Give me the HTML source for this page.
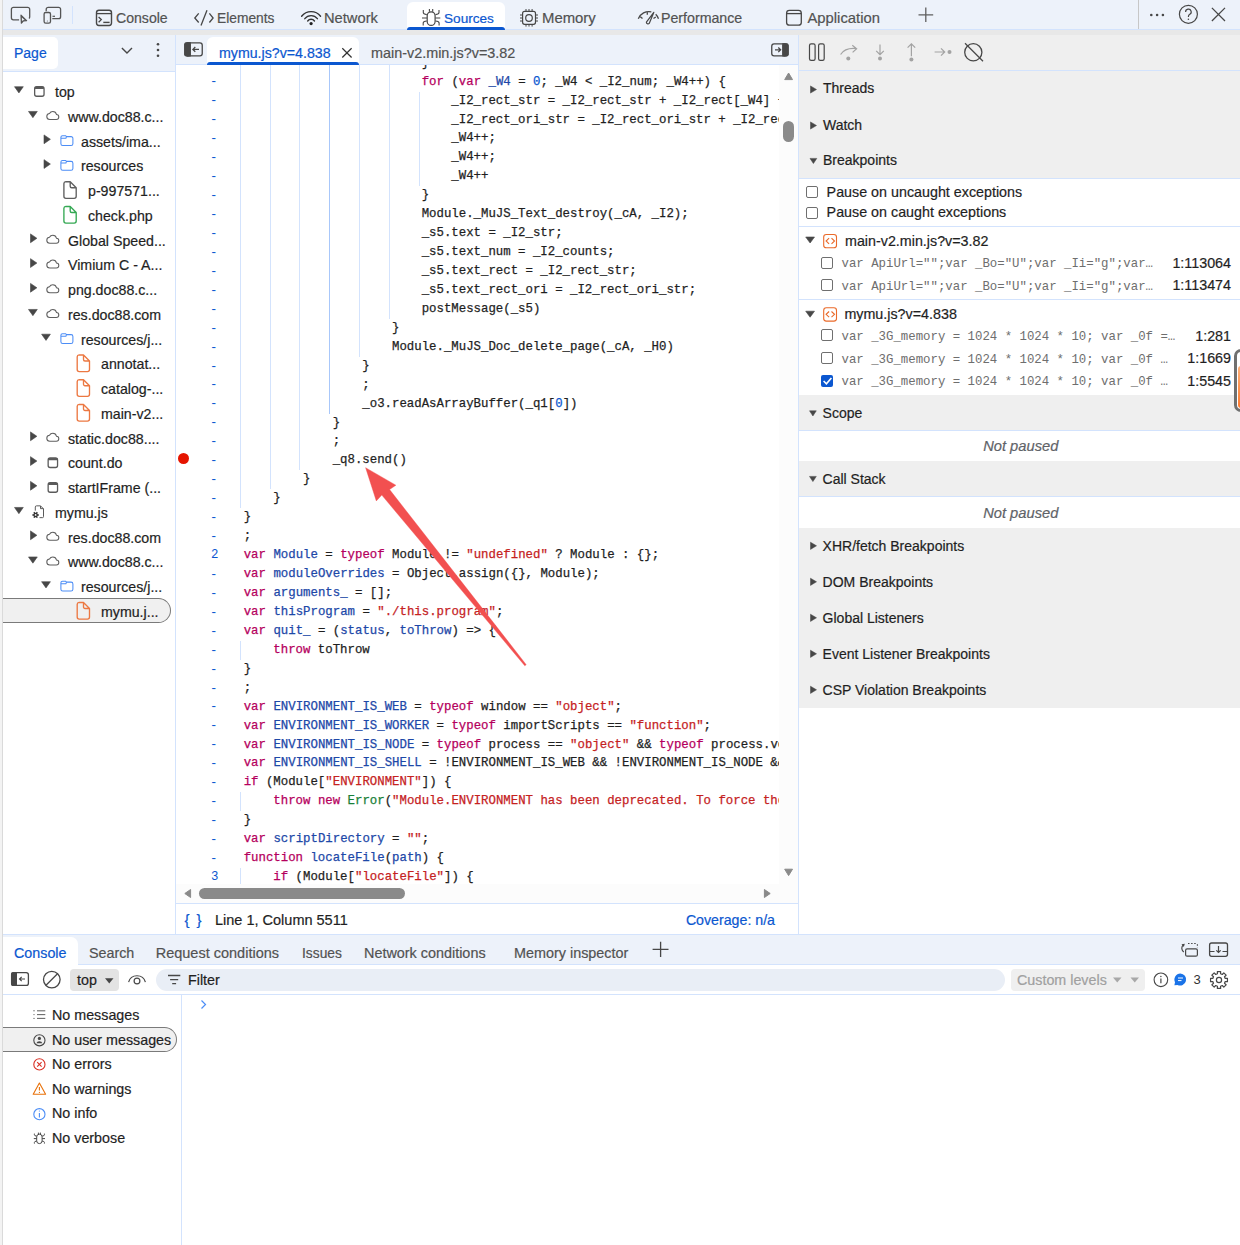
<!DOCTYPE html>
<html><head><meta charset="utf-8">
<style>
*{margin:0;padding:0;box-sizing:border-box}
html,body{width:1240px;height:1245px;overflow:hidden;background:#fff;font-family:"Liberation Sans",sans-serif;color:#1f1f1f}
.a{position:absolute}
.t{position:absolute;white-space:nowrap;font-size:14px;line-height:16px;-webkit-text-stroke:0.2px currentColor}
.bg1{background:#edf2fa}
.hl{position:absolute;height:1px;background:#d3e3fd}
.vl{position:absolute;width:1px;background:#d3e3fd}
.code{position:absolute;font-family:"Liberation Mono",monospace;font-size:12.37px;line-height:18.94px;white-space:pre;color:#1f1f1f;-webkit-text-stroke:0.25px currentColor}
.k{color:#b5005d}
.d{color:#1d48a8}
.s{color:#c5221f}
.n{color:#0b57d0}
.g{color:#188038}
.ln{position:absolute;font-family:"Liberation Mono",monospace;font-size:12.37px;line-height:18.94px;color:#0b57d0;white-space:pre}
.sec{position:absolute;left:799px;width:441px;background:#efefef}
.bpc{position:absolute;font-family:"Liberation Mono",monospace;font-size:12px;line-height:16px;white-space:pre;color:#6e6e6e}
#ov{position:absolute;left:0;top:0}
</style></head><body>
<div class="a" style="left:0px;top:0px;width:2px;height:1245px;background:#f3f3f3;"></div>
<div class="a" style="left:2px;top:0px;width:1px;height:1245px;background:#dadada;"></div>
<div class="a" style="left:3px;top:0px;width:1237px;height:29px;background:#edf2fa;"></div>
<div class="a" style="left:3px;top:29px;width:1237px;height:1px;background:#d3e3fd;"></div>
<div class="a" style="left:3px;top:30px;width:1237px;height:5px;background:#e8e8e8;"></div>
<div class="a" style="left:407px;top:2px;width:98px;height:28px;background:#fff;border-radius:6px 6px 0 0"></div>
<div class="a" style="left:407px;top:27px;width:98px;height:3px;background:#0b57d0;border-radius:3px 3px 0 0"></div>
<div class="a" style="left:1138px;top:0px;width:1px;height:29px;background:#c7c7c7;"></div>
<div class="t" style="left:116px;top:9.70px;color:#525252;font-size:14.1px;">Console</div>
<div class="t" style="left:217px;top:10.70px;color:#525252;font-size:13.8px;">Elements</div>
<div class="t" style="left:324px;top:9.70px;color:#525252;font-size:14.7px;">Network</div>
<div class="t" style="left:444px;top:10.70px;color:#0b57d0;font-size:13.6px;">Sources</div>
<div class="t" style="left:542px;top:9.70px;color:#525252;font-size:14.9px;">Memory</div>
<div class="t" style="left:661px;top:9.70px;color:#525252;font-size:14.2px;">Performance</div>
<div class="t" style="left:807.5px;top:9.70px;color:#525252;font-size:14.8px;">Application</div>
<div class="a" style="left:3px;top:35px;width:172px;height:36px;background:#edf2fa;"></div>
<div class="a" style="left:3px;top:37px;width:55px;height:32px;background:#fff;border-radius:0 5px 5px 0"></div>
<div class="t" style="left:14px;top:44.60px;color:#0b57d0;">Page</div>
<div class="a" style="left:3px;top:71px;width:172px;height:1px;background:#d3e3fd;"></div>
<div class="a" style="left:175px;top:35px;width:1px;height:899px;background:#d3e3fd;"></div>
<div class="a" style="left:3px;top:598px;width:168px;height:25px;background:#f0f0f0;border:1px solid #7a7a7a;border-left:none;border-radius:0 12.5px 12.5px 0"></div>
<div class="t" style="left:55px;top:84.20px;color:#1f1f1f;font-size:14.2px;">top</div>
<div class="t" style="left:68px;top:108.95px;color:#1f1f1f;font-size:14.2px;">www.doc88.c...</div>
<div class="t" style="left:81px;top:133.70px;color:#1f1f1f;font-size:14.2px;">assets/ima...</div>
<div class="t" style="left:81px;top:158.45px;color:#1f1f1f;font-size:14.2px;">resources</div>
<div class="t" style="left:88px;top:183.20px;color:#1f1f1f;font-size:14.2px;">p-997571...</div>
<div class="t" style="left:88px;top:207.95px;color:#1f1f1f;font-size:14.2px;">check.php</div>
<div class="t" style="left:68px;top:232.70px;color:#1f1f1f;font-size:14.2px;">Global Speed...</div>
<div class="t" style="left:68px;top:257.45px;color:#1f1f1f;font-size:14.2px;">Vimium C - A...</div>
<div class="t" style="left:68px;top:282.20px;color:#1f1f1f;font-size:14.2px;">png.doc88.c...</div>
<div class="t" style="left:68px;top:306.95px;color:#1f1f1f;font-size:14.2px;">res.doc88.com</div>
<div class="t" style="left:81px;top:331.70px;color:#1f1f1f;font-size:14.2px;">resources/j...</div>
<div class="t" style="left:101px;top:356.45px;color:#1f1f1f;font-size:14.2px;">annotat...</div>
<div class="t" style="left:101px;top:381.20px;color:#1f1f1f;font-size:14.2px;">catalog-...</div>
<div class="t" style="left:101px;top:405.95px;color:#1f1f1f;font-size:14.2px;">main-v2...</div>
<div class="t" style="left:68px;top:430.70px;color:#1f1f1f;font-size:14.2px;">static.doc88....</div>
<div class="t" style="left:68px;top:455.45px;color:#1f1f1f;font-size:14.2px;">count.do</div>
<div class="t" style="left:68px;top:480.20px;color:#1f1f1f;font-size:14.2px;">startIFrame (...</div>
<div class="t" style="left:55px;top:504.95px;color:#1f1f1f;font-size:14.2px;">mymu.js</div>
<div class="t" style="left:68px;top:529.70px;color:#1f1f1f;font-size:14.2px;">res.doc88.com</div>
<div class="t" style="left:68px;top:554.45px;color:#1f1f1f;font-size:14.2px;">www.doc88.c...</div>
<div class="t" style="left:81px;top:579.20px;color:#1f1f1f;font-size:14.2px;">resources/j...</div>
<div class="t" style="left:101px;top:603.95px;color:#1f1f1f;font-size:14.2px;">mymu.j...</div>
<div class="a" style="left:176px;top:35px;width:622px;height:29px;background:#edf2fa;"></div>
<div class="a" style="left:176px;top:64px;width:622px;height:1px;background:#d3e3fd;"></div>
<div class="a" style="left:207px;top:37px;width:152px;height:27px;background:#fff;border-radius:6px 6px 0 0"></div>
<div class="a" style="left:207px;top:61.7px;width:152px;height:3px;background:#0b57d0;border-radius:3px 3px 0 0"></div>
<div class="t" style="left:219px;top:44.60px;color:#0b57d0;font-size:14.2px;">mymu.js?v=4.838</div>
<div class="t" style="left:371px;top:44.60px;color:#525252;font-size:14.4px;">main-v2.min.js?v=3.82</div>
<div class="a" style="left:176px;top:65px;width:603px;height:819px;overflow:hidden;background:#fff">
<div class="a" style="left:64px;top:0px;width:1px;height:443.25000000000006px;background:#d3e3fd"></div>
<div class="a" style="left:94px;top:0px;width:1px;height:424.31px;background:#d3e3fd"></div>
<div class="a" style="left:123px;top:0px;width:1px;height:405.37px;background:#d3e3fd"></div>
<div class="a" style="left:153px;top:0px;width:1px;height:348.55px;background:#a8c7fa"></div>
<div class="a" style="left:183px;top:0px;width:1px;height:291.73px;background:#d3e3fd"></div>
<div class="a" style="left:213px;top:0px;width:1px;height:253.85000000000002px;background:#d3e3fd"></div>
<div class="a" style="left:242.5px;top:26.57px;width:1px;height:94.7px;background:#d3e3fd"></div>
<div class="a" style="left:64px;top:575.8299999999999px;width:1px;height:18.94px;background:#d3e3fd"></div>
<div class="a" style="left:64px;top:727.3500000000001px;width:1px;height:18.94px;background:#d3e3fd"></div>
<div class="a" style="left:64px;top:803.1100000000001px;width:1px;height:18.94px;background:#d3e3fd"></div>
<div class="code" style="top:-11.31px;left:67.7px">                        }</div>
<div class="ln" style="top:-10.51px;left:34px">-</div>
<div class="code" style="top:7.63px;left:67.7px">                        <span class="k">for</span> (<span class="k">var</span> <span class="d">_W4</span> = <span class="n">0</span>; _W4 &lt; _I2_num; _W4++) {</div>
<div class="ln" style="top:8.43px;left:34px">-</div>
<div class="code" style="top:26.57px;left:67.7px">                            _I2_rect_str = _I2_rect_str + _I2_rect[_W4] + &quot;</div>
<div class="ln" style="top:27.37px;left:34px">-</div>
<div class="code" style="top:45.51px;left:67.7px">                            _I2_rect_ori_str = _I2_rect_ori_str + _I2_rect_ori</div>
<div class="ln" style="top:46.31px;left:34px">-</div>
<div class="code" style="top:64.45px;left:67.7px">                            _W4++;</div>
<div class="ln" style="top:65.25px;left:34px">-</div>
<div class="code" style="top:83.39px;left:67.7px">                            _W4++;</div>
<div class="ln" style="top:84.19px;left:34px">-</div>
<div class="code" style="top:102.33px;left:67.7px">                            _W4++</div>
<div class="ln" style="top:103.13px;left:34px">-</div>
<div class="code" style="top:121.27px;left:67.7px">                        }</div>
<div class="ln" style="top:122.07px;left:34px">-</div>
<div class="code" style="top:140.21px;left:67.7px">                        Module._MuJS_Text_destroy(_cA, _I2);</div>
<div class="ln" style="top:141.01px;left:34px">-</div>
<div class="code" style="top:159.15px;left:67.7px">                        _s5.text = _I2_str;</div>
<div class="ln" style="top:159.95px;left:34px">-</div>
<div class="code" style="top:178.09px;left:67.7px">                        _s5.text_num = _I2_counts;</div>
<div class="ln" style="top:178.89px;left:34px">-</div>
<div class="code" style="top:197.03px;left:67.7px">                        _s5.text_rect = _I2_rect_str;</div>
<div class="ln" style="top:197.83px;left:34px">-</div>
<div class="code" style="top:215.97px;left:67.7px">                        _s5.text_rect_ori = _I2_rect_ori_str;</div>
<div class="ln" style="top:216.77px;left:34px">-</div>
<div class="code" style="top:234.91px;left:67.7px">                        postMessage(_s5)</div>
<div class="ln" style="top:235.71px;left:34px">-</div>
<div class="code" style="top:253.85px;left:67.7px">                    }</div>
<div class="ln" style="top:254.65px;left:34px">-</div>
<div class="code" style="top:272.79px;left:67.7px">                    Module._MuJS_Doc_delete_page(_cA, _H0)</div>
<div class="ln" style="top:273.59px;left:34px">-</div>
<div class="code" style="top:291.73px;left:67.7px">                }</div>
<div class="ln" style="top:292.53px;left:34px">-</div>
<div class="code" style="top:310.67px;left:67.7px">                ;</div>
<div class="ln" style="top:311.47px;left:34px">-</div>
<div class="code" style="top:329.61px;left:67.7px">                _o3.readAsArrayBuffer(_q1[<span class="n">0</span>])</div>
<div class="ln" style="top:330.41px;left:34px">-</div>
<div class="code" style="top:348.55px;left:67.7px">            }</div>
<div class="ln" style="top:349.35px;left:34px">-</div>
<div class="code" style="top:367.49px;left:67.7px">            ;</div>
<div class="ln" style="top:368.29px;left:34px">-</div>
<div class="code" style="top:386.43px;left:67.7px">            _q8.send()</div>
<div class="ln" style="top:387.23px;left:34px">-</div>
<div class="code" style="top:405.37px;left:67.7px">        }</div>
<div class="ln" style="top:406.17px;left:34px">-</div>
<div class="code" style="top:424.31px;left:67.7px">    }</div>
<div class="ln" style="top:425.11px;left:34px">-</div>
<div class="code" style="top:443.25px;left:67.7px">}</div>
<div class="ln" style="top:444.05px;left:34px">-</div>
<div class="code" style="top:462.19px;left:67.7px">;</div>
<div class="ln" style="top:462.99px;left:34px">-</div>
<div class="code" style="top:481.13px;left:67.7px"><span class="k">var</span> <span class="d">Module</span> = <span class="k">typeof</span> Module != <span class="s">&quot;undefined&quot;</span> ? Module : {};</div>
<div class="ln" style="top:481.13px;left:35px">2</div>
<div class="code" style="top:500.07px;left:67.7px"><span class="k">var</span> <span class="d">moduleOverrides</span> = Object.assign({}, Module);</div>
<div class="ln" style="top:500.87px;left:34px">-</div>
<div class="code" style="top:519.01px;left:67.7px"><span class="k">var</span> <span class="d">arguments_</span> = [];</div>
<div class="ln" style="top:519.81px;left:34px">-</div>
<div class="code" style="top:537.95px;left:67.7px"><span class="k">var</span> <span class="d">thisProgram</span> = <span class="s">&quot;./this.program&quot;</span>;</div>
<div class="ln" style="top:538.75px;left:34px">-</div>
<div class="code" style="top:556.89px;left:67.7px"><span class="k">var</span> <span class="d">quit_</span> = (<span class="d">status</span>, <span class="d">toThrow</span>) =&gt; {</div>
<div class="ln" style="top:557.69px;left:34px">-</div>
<div class="code" style="top:575.83px;left:67.7px">    <span class="k">throw</span> toThrow</div>
<div class="ln" style="top:576.63px;left:34px">-</div>
<div class="code" style="top:594.77px;left:67.7px">}</div>
<div class="ln" style="top:595.57px;left:34px">-</div>
<div class="code" style="top:613.71px;left:67.7px">;</div>
<div class="ln" style="top:614.51px;left:34px">-</div>
<div class="code" style="top:632.65px;left:67.7px"><span class="k">var</span> <span class="d">ENVIRONMENT_IS_WEB</span> = <span class="k">typeof</span> window == <span class="s">&quot;object&quot;</span>;</div>
<div class="ln" style="top:633.45px;left:34px">-</div>
<div class="code" style="top:651.59px;left:67.7px"><span class="k">var</span> <span class="d">ENVIRONMENT_IS_WORKER</span> = <span class="k">typeof</span> importScripts == <span class="s">&quot;function&quot;</span>;</div>
<div class="ln" style="top:652.39px;left:34px">-</div>
<div class="code" style="top:670.53px;left:67.7px"><span class="k">var</span> <span class="d">ENVIRONMENT_IS_NODE</span> = <span class="k">typeof</span> process == <span class="s">&quot;object&quot;</span> &amp;&amp; <span class="k">typeof</span> process.versions</div>
<div class="ln" style="top:671.33px;left:34px">-</div>
<div class="code" style="top:689.47px;left:67.7px"><span class="k">var</span> <span class="d">ENVIRONMENT_IS_SHELL</span> = !ENVIRONMENT_IS_WEB &amp;&amp; !ENVIRONMENT_IS_NODE &amp;&amp; </div>
<div class="ln" style="top:690.27px;left:34px">-</div>
<div class="code" style="top:708.41px;left:67.7px"><span class="k">if</span> (Module[<span class="s">&quot;ENVIRONMENT&quot;</span>]) {</div>
<div class="ln" style="top:709.21px;left:34px">-</div>
<div class="code" style="top:727.35px;left:67.7px">    <span class="k">throw</span> <span class="k">new</span> <span class="g">Error</span>(<span class="s">&quot;Module.ENVIRONMENT has been deprecated. To force the</span></div>
<div class="ln" style="top:728.15px;left:34px">-</div>
<div class="code" style="top:746.29px;left:67.7px">}</div>
<div class="ln" style="top:747.09px;left:34px">-</div>
<div class="code" style="top:765.23px;left:67.7px"><span class="k">var</span> <span class="d">scriptDirectory</span> = <span class="s">&quot;&quot;</span>;</div>
<div class="ln" style="top:766.03px;left:34px">-</div>
<div class="code" style="top:784.17px;left:67.7px"><span class="k">function</span> <span class="d">locateFile</span>(<span class="d">path</span>) {</div>
<div class="ln" style="top:784.97px;left:34px">-</div>
<div class="code" style="top:803.11px;left:67.7px">    <span class="k">if</span> (Module[<span class="s">&quot;locateFile&quot;</span>]) {</div>
<div class="ln" style="top:803.11px;left:35px">3</div>
<div class="a" style="left:2px;top:388px;width:11px;height:11px;border-radius:50%;background:#e51400"></div>
</div>
<div class="a" style="left:779px;top:65px;width:19px;height:819px;background:#fcfcfc;"></div>
<div class="a" style="left:783px;top:121px;width:11px;height:21px;background:#8a8a8a;border-radius:5.5px"></div>
<div class="a" style="left:176px;top:884px;width:603px;height:19px;background:#fcfcfc;"></div>
<div class="a" style="left:198.6px;top:887.7px;width:206.7px;height:11px;background:#8a8a8a;border-radius:5.5px"></div>
<div class="a" style="left:779px;top:884px;width:19px;height:19px;background:#fcfcfc;"></div>
<div class="a" style="left:176px;top:903px;width:622px;height:1px;background:#d3e3fd;"></div>
<div class="t" style="left:184.5px;top:912.00px;color:#0b57d0;font-size:15px;">{</div>
<div class="t" style="left:196.5px;top:912.00px;color:#0b57d0;font-size:15px;">}</div>
<div class="t" style="left:215px;top:912.00px;color:#1f1f1f;font-size:14.5px;">Line 1, Column 5511</div>
<div class="t" style="right:465px;top:912.00px;color:#0b57d0;font-size:14.2px;">Coverage: n/a</div>
<div class="a" style="left:798px;top:35px;width:1px;height:899px;background:#d3e3fd;"></div>
<div class="a" style="left:799px;top:35px;width:441px;height:35px;background:#efefef;"></div>
<div class="a" style="left:799px;top:70px;width:441px;height:1px;background:#d3e3fd;"></div>
<div class="a" style="left:799px;top:71px;width:441px;height:107px;background:#efefef;"></div>
<div class="a" style="left:799px;top:178px;width:441px;height:1px;background:#d3e3fd;"></div>
<div class="t" style="left:823px;top:80.40px;color:#1f1f1f;">Threads</div>
<div class="t" style="left:823px;top:116.60px;color:#1f1f1f;">Watch</div>
<div class="t" style="left:823px;top:152.40px;color:#1f1f1f;">Breakpoints</div>
<div class="t" style="left:826.6px;top:183.50px;color:#1f1f1f;font-size:14.3px;">Pause on uncaught exceptions</div>
<div class="t" style="left:826.6px;top:203.70px;color:#1f1f1f;font-size:14.3px;">Pause on caught exceptions</div>
<div class="a" style="left:799px;top:226px;width:441px;height:1px;background:#d3e3fd;"></div>
<div class="t" style="left:845px;top:233.00px;color:#1f1f1f;font-size:14.3px;">main-v2.min.js?v=3.82</div>
<div class="a" style="left:799px;top:299px;width:441px;height:1px;background:#d3e3fd;"></div>
<div class="t" style="left:844.4px;top:306.30px;color:#1f1f1f;font-size:14.3px;">mymu.js?v=4.838</div>
<div class="a" style="left:799px;top:395px;width:441px;height:35px;background:#efefef;"></div>
<div class="a" style="left:799px;top:430px;width:441px;height:1px;background:#d3e3fd;"></div>
<div class="t" style="left:822.6px;top:405.00px;color:#1f1f1f;">Scope</div>
<div class="t" style="left:983.2px;top:437.50px;color:#5f6368;font-size:14.7px;font-style:italic;">Not paused</div>
<div class="a" style="left:799px;top:461px;width:441px;height:35px;background:#efefef;"></div>
<div class="a" style="left:799px;top:496px;width:441px;height:1px;background:#d3e3fd;"></div>
<div class="t" style="left:822.6px;top:470.50px;color:#1f1f1f;">Call Stack</div>
<div class="t" style="left:983.2px;top:504.60px;color:#5f6368;font-size:14.7px;font-style:italic;">Not paused</div>
<div class="a" style="left:799px;top:528px;width:441px;height:180px;background:#efefef;"></div>
<div class="t" style="left:822.6px;top:538.20px;color:#1f1f1f;">XHR/fetch Breakpoints</div>
<div class="t" style="left:822.6px;top:574.20px;color:#1f1f1f;">DOM Breakpoints</div>
<div class="t" style="left:822.6px;top:610.20px;color:#1f1f1f;">Global Listeners</div>
<div class="t" style="left:822.6px;top:646.20px;color:#1f1f1f;">Event Listener Breakpoints</div>
<div class="t" style="left:822.6px;top:682.20px;color:#1f1f1f;">CSP Violation Breakpoints</div>
<div class="bpc" style="left:841.5px;top:256.40px;font-size:12.37px">var ApiUrl=&quot;&quot;;var _Bo=&quot;U&quot;;var _Ii=&quot;g&quot;;var…</div>
<div class="t" style="right:9px;top:254.90px;color:#1f1f1f;font-size:14.3px;">1:113064</div>
<div class="bpc" style="left:841.5px;top:278.70px;font-size:12.37px">var ApiUrl=&quot;&quot;;var _Bo=&quot;U&quot;;var _Ii=&quot;g&quot;;var…</div>
<div class="t" style="right:9px;top:277.20px;color:#1f1f1f;font-size:14.3px;">1:113474</div>
<div class="bpc" style="left:841.5px;top:329.00px;font-size:12.37px">var _3G_memory = 1024 * 1024 * 10; var _0f =…</div>
<div class="t" style="right:9px;top:327.50px;color:#1f1f1f;font-size:14.3px;">1:281</div>
<div class="bpc" style="left:841.5px;top:351.50px;font-size:12.37px">var _3G_memory = 1024 * 1024 * 10; var _0f …</div>
<div class="t" style="right:9px;top:350.00px;color:#1f1f1f;font-size:14.3px;">1:1669</div>
<div class="bpc" style="left:841.5px;top:374.20px;font-size:12.37px">var _3G_memory = 1024 * 1024 * 10; var _0f …</div>
<div class="t" style="right:9px;top:372.70px;color:#1f1f1f;font-size:14.3px;">1:5545</div>
<div class="a" style="left:806px;top:186.4px;width:12px;height:12px;border:1px solid #6f6f6f;border-radius:2px;background:#fff"></div>
<div class="a" style="left:806px;top:206.6px;width:12px;height:12px;border:1px solid #6f6f6f;border-radius:2px;background:#fff"></div>
<div class="a" style="left:821.3px;top:256.5px;width:12px;height:12px;border:1px solid #6f6f6f;border-radius:2px;background:#fff"></div>
<div class="a" style="left:821.3px;top:279px;width:12px;height:12px;border:1px solid #6f6f6f;border-radius:2px;background:#fff"></div>
<div class="a" style="left:821.3px;top:329.4px;width:12px;height:12px;border:1px solid #6f6f6f;border-radius:2px;background:#fff"></div>
<div class="a" style="left:821.3px;top:352px;width:12px;height:12px;border:1px solid #6f6f6f;border-radius:2px;background:#fff"></div>
<div class="a" style="left:821.3px;top:375px;width:12px;height:12px;border-radius:2px;background:#0b57d0"></div>
<div class="a" style="left:1234px;top:348.5px;width:20px;height:63px;border:3px solid #707070;border-radius:7px;background:#fff"></div>
<div class="a" style="left:1237.5px;top:366px;width:10px;height:42px;background:linear-gradient(#ffb27a,#ff7a2e);border-radius:3px"></div>
<div class="a" style="left:3px;top:934px;width:1237px;height:1px;background:#d3e3fd;"></div>
<div class="a" style="left:3px;top:935px;width:1237px;height:30px;background:#edf2fa;"></div>
<div class="a" style="left:3px;top:937px;width:75px;height:28px;background:#fff;border-radius:0 7px 0 0"></div>
<div class="a" style="left:78px;top:964px;width:1162px;height:1px;background:#d3e3fd;"></div>
<div class="t" style="left:14px;top:945.00px;color:#0b57d0;font-size:14.3px;">Console</div>
<div class="t" style="left:89px;top:945.00px;color:#525252;font-size:14.3px;">Search</div>
<div class="t" style="left:155.7px;top:945.00px;color:#525252;font-size:14.5px;">Request conditions</div>
<div class="t" style="left:302px;top:946.00px;color:#525252;font-size:13.8px;">Issues</div>
<div class="t" style="left:364px;top:945.00px;color:#525252;font-size:14.4px;">Network conditions</div>
<div class="t" style="left:514px;top:945.00px;color:#525252;font-size:14.4px;">Memory inspector</div>
<div class="a" style="left:3px;top:965px;width:1237px;height:29px;background:#fff;"></div>
<div class="a" style="left:3px;top:994px;width:1237px;height:1px;background:#d3e3fd;"></div>
<div class="a" style="left:70px;top:969px;width:49px;height:22px;background:#e3e3e3;border-radius:4px"></div>
<div class="t" style="left:77px;top:972.00px;color:#1f1f1f;font-size:14.3px;">top</div>
<div class="a" style="left:155.7px;top:969px;width:849.3px;height:22.1px;background:#e9eef6;border-radius:11px"></div>
<div class="t" style="left:188px;top:971.60px;color:#1f1f1f;font-size:14.3px;">Filter</div>
<div class="a" style="left:1011px;top:969px;width:134px;height:22px;background:#efefef;border-radius:4px"></div>
<div class="t" style="left:1017px;top:972.00px;color:#a0a0a0;font-size:14.3px;">Custom levels</div>
<div class="t" style="left:1193.5px;top:972.00px;color:#333;font-size:13px;-webkit-text-stroke:0">3</div>
<div class="a" style="left:181px;top:995px;width:1px;height:250px;background:#d3e3fd;"></div>
<div class="a" style="left:3px;top:1027px;width:174px;height:25px;background:#f0f0f0;border:1px solid #7a7a7a;border-left:none;border-radius:0 12.5px 12.5px 0"></div>
<div class="t" style="left:52px;top:1007.00px;color:#1f1f1f;font-size:14.3px;">No messages</div>
<div class="t" style="left:52px;top:1031.60px;color:#1f1f1f;font-size:14.3px;">No user messages</div>
<div class="t" style="left:52px;top:1056.20px;color:#1f1f1f;font-size:14.3px;">No errors</div>
<div class="t" style="left:52px;top:1080.80px;color:#1f1f1f;font-size:14.3px;">No warnings</div>
<div class="t" style="left:52px;top:1105.40px;color:#1f1f1f;font-size:14.3px;">No info</div>
<div class="t" style="left:52px;top:1130.00px;color:#1f1f1f;font-size:14.3px;">No verbose</div>
<svg id="ov" width="1240" height="1245" viewBox="0 0 1240 1245">
<path d="M19.1 19.8H13.4A2 2 0 0 1 11.4 17.8V9.4A2 2 0 0 1 13.4 7.4H27.7A2 2 0 0 1 29.7 9.4V17.1A2 2 0 0 1 29 18.6" fill="none" stroke="#555" stroke-width="1.3"/>
<path d="M21 15.2L26.6 20.6L23.4 20.9L21.4 23.2Z" fill="#555" stroke="#555" stroke-width="1.2" stroke-linejoin="round"/>
<path d="M21.9 17.4L24.6 20L22.9 20.2L22 21.3Z" fill="#edf2fa"/>
<path d="M46.2 11.3V9.4A2 2 0 0 1 48.2 7.4H58.6A2 2 0 0 1 60.6 9.4V16.7A2 2 0 0 1 58.6 18.7H52.3" fill="none" stroke="#555" stroke-width="1.3"/>
<rect x="44.1" y="12.5" width="6.4" height="10.7" rx="1.6" fill="#edf2fa" stroke="#555" stroke-width="1.3"/>
<path d="M52.5 16.3H55" stroke="#555" stroke-width="1.2"/>
<circle cx="47.3" cy="21" r="0.5" fill="#555"/>
<rect x="72" y="6" width="1" height="18" fill="#d3e3fd"/>
<rect x="96.5" y="10.3" width="15" height="15.2" rx="2.4" fill="none" stroke="#474747" stroke-width="1.4"/>
<path d="M96.5 13.6H111.5" stroke="#474747" stroke-width="1.3"/>
<path d="M98.6 17.1L101.3 19.6L98.6 22.3" fill="none" stroke="#474747" stroke-width="1.3"/>
<path d="M103.3 22.4H109.6" stroke="#474747" stroke-width="1.4"/>
<path d="M198.7 13.3L194.8 18L198.7 22.5M209.4 13.3L213.1 18L209.4 22.5M207 10.2L201 25.6" fill="none" stroke="#474747" stroke-width="1.3"/>
<path d="M301.64 16.21A12 12 0 0 1 320.56 16.21" fill="none" stroke="#333" stroke-width="1.4" stroke-linecap="round"/>
<path d="M304.80 18.67A8 8 0 0 1 317.40 18.67" fill="none" stroke="#333" stroke-width="1.4" stroke-linecap="round"/>
<path d="M307.71 20.95A4.3 4.3 0 0 1 314.49 20.95" fill="none" stroke="#333" stroke-width="1.4" stroke-linecap="round"/>
<circle cx="311.1" cy="23.6" r="1.6" fill="#222"/>
<rect x="427.2" y="11.8" width="7.9" height="13.6" rx="3.95" fill="none" stroke="#474747" stroke-width="1.2"/>
<path d="M429.4 9V11.8M432.7 9V11.8" stroke="#474747" stroke-width="1.1"/>
<path d="M423.3 10V12.5Q423.3 14.3 426.8 14.6M439 10V12.5Q439 14.3 435.5 14.6M422 18H427M435.3 18H440.3M423.2 25.5V23Q423.2 21.3 426.8 21M439.1 25.5V23Q439.1 21.3 435.5 21" fill="none" stroke="#474747" stroke-width="1.1"/>
<rect x="522.6" y="11.4" width="12.9" height="12.9" rx="2" fill="none" stroke="#474747" stroke-width="1.2"/>
<path d="M526 9V11.4M526 24.3V26.6" stroke="#474747" stroke-width="1"/>
<path d="M529 9V11.4M529 24.3V26.6" stroke="#474747" stroke-width="1"/>
<path d="M532.1 9V11.4M532.1 24.3V26.6" stroke="#474747" stroke-width="1"/>
<path d="M520 15H522.6M535.5 15H538" stroke="#474747" stroke-width="1"/>
<path d="M520 18H522.6M535.5 18H538" stroke="#474747" stroke-width="1"/>
<path d="M520 21H522.6M535.5 21H538" stroke="#474747" stroke-width="1"/>
<circle cx="529" cy="18" r="3.3" fill="none" stroke="#474747" stroke-width="1.2"/>
<path d="M638.3 18.7A11.5 11.5 0 0 1 651.3 11.8M655.7 14.3A11.5 11.5 0 0 1 658.5 18.8M647.3 11.5V14.7M640.3 16.7L642.5 18.5M653.5 18.5L655.8 17" fill="none" stroke="#474747" stroke-width="1.3"/>
<path d="M653.8 12.4L646.4 22.2A1.6 1.6 0 0 0 649.2 23.4Z" fill="none" stroke="#474747" stroke-width="1.2" stroke-linejoin="round"/>
<rect x="786.6" y="10.4" width="14.7" height="14.8" rx="2.8" fill="none" stroke="#474747" stroke-width="1.3"/>
<path d="M786.6 13.6H801.3" stroke="#474747" stroke-width="1.3"/>
<path d="M925.8 7.5V22M918.5 14.8H933.2" stroke="#5f5f5f" stroke-width="1.3"/>
<circle cx="1151.3" cy="15" r="1.3" fill="#474747"/>
<circle cx="1157.1" cy="15" r="1.3" fill="#474747"/>
<circle cx="1162.9" cy="15" r="1.3" fill="#474747"/>
<circle cx="1188.4" cy="14.3" r="9" fill="none" stroke="#474747" stroke-width="1.2"/>
<path d="M1185.6 12A2.8 2.8 0 1 1 1189.5 14.5C1188.6 15 1188.4 15.6 1188.4 16.9" fill="none" stroke="#474747" stroke-width="1.2"/>
<circle cx="1188.4" cy="19.3" r="0.8" fill="#474747"/>
<path d="M1211.9 7.9L1225 21M1225 7.9L1211.9 21" stroke="#474747" stroke-width="1.3"/>
<path d="M121.9 48L127 53.1L132 48" fill="none" stroke="#474747" stroke-width="1.4"/>
<circle cx="158" cy="44.2" r="1.3" fill="#474747"/>
<circle cx="158" cy="50" r="1.3" fill="#474747"/>
<circle cx="158" cy="55.8" r="1.3" fill="#474747"/>
<path d="M14.5 86.70000000000002H23.3L18.9 92.9Z" fill="#474747" stroke="#474747" stroke-width="0.6" stroke-linejoin="round"/>
<rect x="34.65" y="86.75" width="9.4" height="9.5" rx="2" fill="none" stroke="#5a5a5a" stroke-width="1.3"/>
<path d="M34.8 87.9H43.9" stroke="#5a5a5a" stroke-width="2.2"/>
<path d="M28.5 111.45000000000002H37.3L32.9 117.65Z" fill="#474747" stroke="#474747" stroke-width="0.6" stroke-linejoin="round"/>
<path transform="translate(46.80 109.50) scale(0.5)" d="M19.35 10.04C18.67 6.59 15.64 4 12 4C9.11 4 6.6 5.64 5.35 8.04C2.34 8.36 0 10.91 0 14C0 17.31 2.69 20 6 20H19C21.76 20 24 17.76 24 15C24 12.36 21.95 10.22 19.35 10.04Z" fill="none" stroke="#5f5f5f" stroke-width="2.1"/>
<path d="M44 134.9L50.4 139.3L44 143.70000000000002Z" fill="#474747" stroke="#474747" stroke-width="0.6" stroke-linejoin="round"/>
<path d="M60.9 138.1V143.7A1.8 1.8 0 0 0 62.699999999999996 145.5H71.1A1.8 1.8 0 0 0 72.89999999999999 143.7V138.4A1.8 1.8 0 0 0 71.1 136.6H66.5L65.5 135.7H62.5A1.6 1.6 0 0 0 60.9 137.29999999999998Z M60.9 138.2H65.89999999999999L66.5 136.6" fill="none" stroke="#4c8df6" stroke-width="1.05" stroke-linejoin="round"/>
<path d="M44 159.65L50.4 164.05L44 168.45000000000002Z" fill="#474747" stroke="#474747" stroke-width="0.6" stroke-linejoin="round"/>
<path d="M60.9 162.85V168.45A1.8 1.8 0 0 0 62.699999999999996 170.25H71.1A1.8 1.8 0 0 0 72.89999999999999 168.45V163.15A1.8 1.8 0 0 0 71.1 161.35H66.5L65.5 160.45H62.5A1.6 1.6 0 0 0 60.9 162.04999999999998Z M60.9 162.95H65.89999999999999L66.5 161.35" fill="none" stroke="#4c8df6" stroke-width="1.05" stroke-linejoin="round"/>
<path d="M65.8 181.7H70.2L76.2 187.7V196.3A2 2 0 0 1 74.2 198.3H65.9A2 2 0 0 1 63.900000000000006 196.3V183.6A2 2 0 0 1 65.8 181.7Z M70.2 181.9V186.2A1.5 1.5 0 0 0 71.7 187.7H76.0" fill="none" stroke="#5f5f5f" stroke-width="1.35" stroke-linejoin="round"/>
<path d="M65.8 206.45H70.2L76.2 212.45V221.05A2 2 0 0 1 74.2 223.05H65.9A2 2 0 0 1 63.900000000000006 221.05V208.35A2 2 0 0 1 65.8 206.45Z M70.2 206.65V210.95A1.5 1.5 0 0 0 71.7 212.45H76.0" fill="none" stroke="#34a853" stroke-width="1.35" stroke-linejoin="round"/>
<path d="M30.5 233.9L36.9 238.3L30.5 242.70000000000002Z" fill="#474747" stroke="#474747" stroke-width="0.6" stroke-linejoin="round"/>
<path transform="translate(46.80 233.25) scale(0.5)" d="M19.35 10.04C18.67 6.59 15.64 4 12 4C9.11 4 6.6 5.64 5.35 8.04C2.34 8.36 0 10.91 0 14C0 17.31 2.69 20 6 20H19C21.76 20 24 17.76 24 15C24 12.36 21.95 10.22 19.35 10.04Z" fill="none" stroke="#5f5f5f" stroke-width="2.1"/>
<path d="M30.5 258.65L36.9 263.04999999999995L30.5 267.44999999999993Z" fill="#474747" stroke="#474747" stroke-width="0.6" stroke-linejoin="round"/>
<path transform="translate(46.80 258.00) scale(0.5)" d="M19.35 10.04C18.67 6.59 15.64 4 12 4C9.11 4 6.6 5.64 5.35 8.04C2.34 8.36 0 10.91 0 14C0 17.31 2.69 20 6 20H19C21.76 20 24 17.76 24 15C24 12.36 21.95 10.22 19.35 10.04Z" fill="none" stroke="#5f5f5f" stroke-width="2.1"/>
<path d="M30.5 283.4L36.9 287.79999999999995L30.5 292.19999999999993Z" fill="#474747" stroke="#474747" stroke-width="0.6" stroke-linejoin="round"/>
<path transform="translate(46.80 282.75) scale(0.5)" d="M19.35 10.04C18.67 6.59 15.64 4 12 4C9.11 4 6.6 5.64 5.35 8.04C2.34 8.36 0 10.91 0 14C0 17.31 2.69 20 6 20H19C21.76 20 24 17.76 24 15C24 12.36 21.95 10.22 19.35 10.04Z" fill="none" stroke="#5f5f5f" stroke-width="2.1"/>
<path d="M28.5 309.44999999999993H37.3L32.9 315.65Z" fill="#474747" stroke="#474747" stroke-width="0.6" stroke-linejoin="round"/>
<path transform="translate(46.80 307.50) scale(0.5)" d="M19.35 10.04C18.67 6.59 15.64 4 12 4C9.11 4 6.6 5.64 5.35 8.04C2.34 8.36 0 10.91 0 14C0 17.31 2.69 20 6 20H19C21.76 20 24 17.76 24 15C24 12.36 21.95 10.22 19.35 10.04Z" fill="none" stroke="#5f5f5f" stroke-width="2.1"/>
<path d="M41.6 334.19999999999993H50.400000000000006L46.0 340.4Z" fill="#474747" stroke="#474747" stroke-width="0.6" stroke-linejoin="round"/>
<path d="M60.9 336.09999999999997V341.7A1.8 1.8 0 0 0 62.699999999999996 343.49999999999994H71.1A1.8 1.8 0 0 0 72.89999999999999 341.7V336.4A1.8 1.8 0 0 0 71.1 334.59999999999997H66.5L65.5 333.7H62.5A1.6 1.6 0 0 0 60.9 335.29999999999995Z M60.9 336.2H65.89999999999999L66.5 334.59999999999997" fill="none" stroke="#4c8df6" stroke-width="1.05" stroke-linejoin="round"/>
<path d="M79.1 354.95H83.5L89.5 360.95V369.55A2 2 0 0 1 87.5 371.55H79.2A2 2 0 0 1 77.2 369.55V356.85A2 2 0 0 1 79.1 354.95Z M83.5 355.15V359.45A1.5 1.5 0 0 0 85.0 360.95H89.3" fill="none" stroke="#ec7842" stroke-width="1.35" stroke-linejoin="round"/>
<path d="M79.1 379.7H83.5L89.5 385.7V394.3A2 2 0 0 1 87.5 396.3H79.2A2 2 0 0 1 77.2 394.3V381.6A2 2 0 0 1 79.1 379.7Z M83.5 379.9V384.2A1.5 1.5 0 0 0 85.0 385.7H89.3" fill="none" stroke="#ec7842" stroke-width="1.35" stroke-linejoin="round"/>
<path d="M79.1 404.45H83.5L89.5 410.45V419.05A2 2 0 0 1 87.5 421.05H79.2A2 2 0 0 1 77.2 419.05V406.35A2 2 0 0 1 79.1 404.45Z M83.5 404.65V408.95A1.5 1.5 0 0 0 85.0 410.45H89.3" fill="none" stroke="#ec7842" stroke-width="1.35" stroke-linejoin="round"/>
<path d="M30.5 431.9L36.9 436.29999999999995L30.5 440.69999999999993Z" fill="#474747" stroke="#474747" stroke-width="0.6" stroke-linejoin="round"/>
<path transform="translate(46.80 431.25) scale(0.5)" d="M19.35 10.04C18.67 6.59 15.64 4 12 4C9.11 4 6.6 5.64 5.35 8.04C2.34 8.36 0 10.91 0 14C0 17.31 2.69 20 6 20H19C21.76 20 24 17.76 24 15C24 12.36 21.95 10.22 19.35 10.04Z" fill="none" stroke="#5f5f5f" stroke-width="2.1"/>
<path d="M30.5 456.65L36.9 461.04999999999995L30.5 465.44999999999993Z" fill="#474747" stroke="#474747" stroke-width="0.6" stroke-linejoin="round"/>
<rect x="48.15" y="458.0" width="9.4" height="9.5" rx="2" fill="none" stroke="#5a5a5a" stroke-width="1.3"/>
<path d="M48.3 459.15H57.4" stroke="#5a5a5a" stroke-width="2.2"/>
<path d="M30.5 481.4L36.9 485.79999999999995L30.5 490.19999999999993Z" fill="#474747" stroke="#474747" stroke-width="0.6" stroke-linejoin="round"/>
<rect x="48.15" y="482.75" width="9.4" height="9.5" rx="2" fill="none" stroke="#5a5a5a" stroke-width="1.3"/>
<path d="M48.3 483.9H57.4" stroke="#5a5a5a" stroke-width="2.2"/>
<path d="M14.5 507.44999999999993H23.3L18.9 513.65Z" fill="#474747" stroke="#474747" stroke-width="0.6" stroke-linejoin="round"/>
<path d="M35.3 510.65V507.04999999999995A1.2 1.2 0 0 1 36.5 505.84999999999997H40.5L43.5 508.84999999999997V516.65A1 1 0 0 1 42.5 517.65H39.5 M40.5 505.95V508.65H43.4" fill="none" stroke="#5a5a5a" stroke-width="1"/>
<path d="M38.83 514.26 L38.83 515.64 L37.79 515.66 L37.31 516.49 L37.81 517.40 L36.62 518.09 L36.08 517.20 L35.12 517.20 L34.58 518.09 L33.39 517.40 L33.89 516.49 L33.41 515.66 L32.37 515.64 L32.37 514.26 L33.41 514.24 L33.89 513.41 L33.39 512.50 L34.58 511.81 L35.12 512.70 L36.08 512.70 L36.62 511.81 L37.81 512.50 L37.31 513.41 L37.79 514.24Z" fill="#333"/><circle cx="35.6" cy="514.9499999999999" r="0.9" fill="#fff"/>
<path d="M30.5 530.9L36.9 535.3L30.5 539.6999999999999Z" fill="#474747" stroke="#474747" stroke-width="0.6" stroke-linejoin="round"/>
<path transform="translate(46.80 530.25) scale(0.5)" d="M19.35 10.04C18.67 6.59 15.64 4 12 4C9.11 4 6.6 5.64 5.35 8.04C2.34 8.36 0 10.91 0 14C0 17.31 2.69 20 6 20H19C21.76 20 24 17.76 24 15C24 12.36 21.95 10.22 19.35 10.04Z" fill="none" stroke="#5f5f5f" stroke-width="2.1"/>
<path d="M28.5 556.9499999999999H37.3L32.9 563.15Z" fill="#474747" stroke="#474747" stroke-width="0.6" stroke-linejoin="round"/>
<path transform="translate(46.80 555.00) scale(0.5)" d="M19.35 10.04C18.67 6.59 15.64 4 12 4C9.11 4 6.6 5.64 5.35 8.04C2.34 8.36 0 10.91 0 14C0 17.31 2.69 20 6 20H19C21.76 20 24 17.76 24 15C24 12.36 21.95 10.22 19.35 10.04Z" fill="none" stroke="#5f5f5f" stroke-width="2.1"/>
<path d="M41.6 581.6999999999999H50.400000000000006L46.0 587.9Z" fill="#474747" stroke="#474747" stroke-width="0.6" stroke-linejoin="round"/>
<path d="M60.9 583.6V589.2A1.8 1.8 0 0 0 62.699999999999996 591.0H71.1A1.8 1.8 0 0 0 72.89999999999999 589.2V583.9A1.8 1.8 0 0 0 71.1 582.1H66.5L65.5 581.2H62.5A1.6 1.6 0 0 0 60.9 582.8000000000001Z M60.9 583.7H65.89999999999999L66.5 582.1" fill="none" stroke="#4c8df6" stroke-width="1.05" stroke-linejoin="round"/>
<path d="M79.1 602.45H83.5L89.5 608.45V617.05A2 2 0 0 1 87.5 619.05H79.2A2 2 0 0 1 77.2 617.05V604.35A2 2 0 0 1 79.1 602.45Z M83.5 602.65V606.95A1.5 1.5 0 0 0 85.0 608.45H89.3" fill="none" stroke="#ec7842" stroke-width="1.35" stroke-linejoin="round"/>
<rect x="184.85" y="42.85" width="17.4" height="13" rx="2.3" fill="none" stroke="#474747" stroke-width="1.3"/>
<rect x="184.2" y="42.2" width="6.6" height="14.3" rx="2.3" fill="#474747"/>
<rect x="187" y="42.2" width="3.8" height="14.3" fill="#474747"/>
<path d="M199 49.4H193M195.3 47L192.9 49.4L195.3 51.8" fill="none" stroke="#474747" stroke-width="1.3"/>
<path d="M342.3 48.3L351.6 57.5M351.6 48.3L342.3 57.5" stroke="#333" stroke-width="1.2"/>
<rect x="771.75" y="43.85" width="16.3" height="12" rx="2.3" fill="none" stroke="#474747" stroke-width="1.3"/>
<rect x="782.3" y="43.2" width="6.4" height="13.3" rx="2.3" fill="#474747"/>
<rect x="782.3" y="43.2" width="3" height="13.3" fill="#474747"/>
<path d="M775 49.8H780.5M778.3 47.5L780.6 49.8L778.3 52.1" fill="none" stroke="#474747" stroke-width="1.3"/>
<path d="M784.7 79.6L788.6 73L792.5 79.6Z" fill="#8a8a8a" stroke="#8a8a8a" stroke-width="1" stroke-linejoin="round"/>
<path d="M784.7 869.2L788.6 875.6L792.5 869.2Z" fill="#8a8a8a" stroke="#8a8a8a" stroke-width="1" stroke-linejoin="round"/>
<path d="M190.6 889.5L184.8 893.5L190.6 897.5Z" fill="#8a8a8a" stroke="#8a8a8a" stroke-width="1" stroke-linejoin="round"/>
<path d="M764.4 889.5L770.2 893.5L764.4 897.5Z" fill="#8a8a8a" stroke="#8a8a8a" stroke-width="1" stroke-linejoin="round"/>
<rect x="809.5" y="43.9" width="5.6" height="16.5" rx="1.6" fill="none" stroke="#474747" stroke-width="1.2"/>
<rect x="818.6" y="43.9" width="5.6" height="16.5" rx="1.6" fill="none" stroke="#474747" stroke-width="1.2"/>
<path d="M840.6 54.5Q845 47.5 856 48.5M852.3 45.3L856.6 48.7L852.6 52.4" fill="none" stroke="#a3a3a3" stroke-width="1.2"/>
<circle cx="848.3" cy="58.6" r="2" fill="#a3a3a3"/>
<path d="M880 44.5V54.5M876.2 50.8L880 54.6L883.8 50.8" fill="none" stroke="#a3a3a3" stroke-width="1.2"/>
<circle cx="880" cy="58.6" r="2" fill="#a3a3a3"/>
<path d="M911.4 56.3V43.8M907.6 47.6L911.4 43.8L915.2 47.6" fill="none" stroke="#a3a3a3" stroke-width="1.2"/>
<circle cx="911.4" cy="59.5" r="2" fill="#a3a3a3"/>
<path d="M934.6 52H944.5M941 48.3L944.7 52L941 55.7" fill="none" stroke="#a3a3a3" stroke-width="1.2"/>
<circle cx="949.5" cy="52" r="2" fill="#a3a3a3"/>
<circle cx="973.3" cy="52.3" r="8.6" fill="none" stroke="#474747" stroke-width="1.3"/>
<path d="M965 43.3L983 61.3" stroke="#474747" stroke-width="1.3"/>
<path d="M810.5 85.9L816.5 89.5L810.5 93.1Z" fill="#474747" stroke="#474747" stroke-width="0.5" stroke-linejoin="round"/>
<path d="M810.5 121.9L816.5 125.5L810.5 129.1Z" fill="#474747" stroke="#474747" stroke-width="0.5" stroke-linejoin="round"/>
<path d="M810 158.4H816.8L813.4 163.6Z" fill="#474747" stroke="#474747" stroke-width="0.5" stroke-linejoin="round"/>
<path d="M809.5 410.79999999999995H816.3L812.9 416.0Z" fill="#474747" stroke="#474747" stroke-width="0.5" stroke-linejoin="round"/>
<path d="M809.5 476.4H816.3L812.9 481.6Z" fill="#474747" stroke="#474747" stroke-width="0.5" stroke-linejoin="round"/>
<path d="M810.5 542.1999999999999L816.5 545.8L810.5 549.4Z" fill="#474747" stroke="#474747" stroke-width="0.5" stroke-linejoin="round"/>
<path d="M810.5 578.1999999999999L816.5 581.8L810.5 585.4Z" fill="#474747" stroke="#474747" stroke-width="0.5" stroke-linejoin="round"/>
<path d="M810.5 614.1999999999999L816.5 617.8L810.5 621.4Z" fill="#474747" stroke="#474747" stroke-width="0.5" stroke-linejoin="round"/>
<path d="M810.5 650.1999999999999L816.5 653.8L810.5 657.4Z" fill="#474747" stroke="#474747" stroke-width="0.5" stroke-linejoin="round"/>
<path d="M810.5 686.1999999999999L816.5 689.8L810.5 693.4Z" fill="#474747" stroke="#474747" stroke-width="0.5" stroke-linejoin="round"/>
<path d="M805.7 237H814.5L810.1 243Z" fill="#474747" stroke="#474747" stroke-width="0.6" stroke-linejoin="round"/>
<path d="M805.7 311.2H814.5L810.1 317.2Z" fill="#474747" stroke="#474747" stroke-width="0.6" stroke-linejoin="round"/>
<rect x="823.7" y="234.5" width="12.8" height="13.3" rx="2.6" fill="none" stroke="#ea6a2a" stroke-width="1.1"/>
<path d="M829.1 238.2L826.1 241L829.1 243.8M831.5 238.2L834.5 241L831.5 243.8" fill="none" stroke="#ea6a2a" stroke-width="1.1"/>
<rect x="823.7" y="307.8" width="12.8" height="13.3" rx="2.6" fill="none" stroke="#ea6a2a" stroke-width="1.1"/>
<path d="M829.1 311.5L826.1 314.3L829.1 317.1M831.5 311.5L834.5 314.3L831.5 317.1" fill="none" stroke="#ea6a2a" stroke-width="1.1"/>
<path d="M823.6 381L826.4 383.8L831.4 378" fill="none" stroke="#fff" stroke-width="1.6"/>
<path d="M660.6 941.8V957M652.6 949.4H668.5" stroke="#474747" stroke-width="1.3"/>
<path d="M1183.8 952A4.5 4.5 0 0 1 1183 945.2" fill="none" stroke="#474747" stroke-width="1.2"/>
<path d="M1181.5 944.2L1184.8 943.8L1183.8 947Z" fill="#474747"/>
<rect x="1185.6" y="948.9" width="11.8" height="7.3" rx="1.5" fill="none" stroke="#474747" stroke-width="1.2"/>
<path d="M1188 943.5H1196A1.5 1.5 0 0 1 1197.4 945V947.5" fill="none" stroke="#474747" stroke-width="1.1" stroke-dasharray="1.5 1.6"/>
<rect x="1209.6" y="943" width="17.9" height="13.3" rx="2" fill="none" stroke="#474747" stroke-width="1.3"/>
<path d="M1209.6 951.5H1214.5M1222.5 951.5H1227.5M1218.5 946V952.5M1216.3 950.3L1218.5 952.5L1220.7 950.3" fill="none" stroke="#474747" stroke-width="1.2"/>
<rect x="11.6" y="972.6" width="16.8" height="12.8" rx="2.2" fill="none" stroke="#474747" stroke-width="1.3"/>
<rect x="11" y="972" width="6" height="14" rx="2.2" fill="#474747"/>
<rect x="14" y="972" width="3" height="14" fill="#474747"/>
<path d="M25 979H19.5M21.7 976.8L19.5 979L21.7 981.2" fill="none" stroke="#474747" stroke-width="1.2"/>
<circle cx="51.8" cy="979.6" r="8.3" fill="none" stroke="#474747" stroke-width="1.3"/>
<path d="M57.5 973.8L46 985.3" stroke="#474747" stroke-width="1.3"/>
<path d="M105 978.3H113.5L109.25 983.5Z" fill="#474747"/>
<path d="M128.6 982.2A8.7 8.7 0 0 1 145.4 982.2" fill="none" stroke="#474747" stroke-width="1.2"/>
<circle cx="137" cy="981" r="2.9" fill="none" stroke="#474747" stroke-width="1.2"/>
<path d="M168 975.5H180.3M170.1 979.6H178.2M172.2 983.7H176.1" stroke="#474747" stroke-width="1.3"/>
<path d="M1113 977.5H1121.5L1117.25 982.5Z" fill="#a8a8a8"/>
<path d="M1130.5 977.5H1139L1134.75 982.5Z" fill="#a8a8a8"/>
<circle cx="1160.9" cy="979.8" r="6.8" fill="none" stroke="#474747" stroke-width="1.1"/>
<path d="M1160.9 978.5V983.2" stroke="#474747" stroke-width="1.2"/><circle cx="1160.9" cy="976.5" r="0.75" fill="#474747"/>
<path d="M1180.3 973.5A6 6 0 1 1 1177.5 984.9L1174.4 985.3L1175 982.2A6 6 0 0 1 1180.3 973.5Z" fill="#1a73e8"/>
<path d="M1178 978H1183M1178 980.6H1181.5" stroke="#fff" stroke-width="1"/>
<path d="M1227.44 978.36 L1227.44 981.64 L1225.21 981.55 L1224.49 983.30 L1226.13 984.81 L1223.81 987.13 L1222.30 985.49 L1220.55 986.21 L1220.64 988.44 L1217.36 988.44 L1217.45 986.21 L1215.70 985.49 L1214.19 987.13 L1211.87 984.81 L1213.51 983.30 L1212.79 981.55 L1210.56 981.64 L1210.56 978.36 L1212.79 978.45 L1213.51 976.70 L1211.87 975.19 L1214.19 972.87 L1215.70 974.51 L1217.45 973.79 L1217.36 971.56 L1220.64 971.56 L1220.55 973.79 L1222.30 974.51 L1223.81 972.87 L1226.13 975.19 L1224.49 976.70 L1225.21 978.45Z" fill="none" stroke="#474747" stroke-width="1.2" stroke-linejoin="round"/>
<circle cx="1219" cy="980" r="2.6" fill="none" stroke="#474747" stroke-width="1.2"/>
<path d="M201.5 1000.5L205.5 1004.5L201.5 1008.5" fill="none" stroke="#4c8df6" stroke-width="1.2"/>
<path d="M37 1010.8H45.3" stroke="#6a6a6a" stroke-width="1.1"/><circle cx="34" cy="1010.8" r="0.7" fill="#6a6a6a"/>
<path d="M37 1014.6H45.3" stroke="#6a6a6a" stroke-width="1.1"/><circle cx="34" cy="1014.6" r="0.7" fill="#6a6a6a"/>
<path d="M37 1018.4H45.3" stroke="#6a6a6a" stroke-width="1.1"/><circle cx="34" cy="1018.4" r="0.7" fill="#6a6a6a"/>
<circle cx="39.4" cy="1040.3" r="5.6" fill="none" stroke="#474747" stroke-width="1.1"/>
<circle cx="39.4" cy="1038.4" r="1.6" fill="#474747"/><path d="M36.4 1043.3A3.1 2.6 0 0 1 42.4 1043.3Z" fill="#474747"/>
<circle cx="39.4" cy="1064.4" r="5.6" fill="none" stroke="#d93025" stroke-width="1.1"/>
<path d="M37.2 1062.2L41.6 1066.6M41.6 1062.2L37.2 1066.6" stroke="#d93025" stroke-width="1.1"/>
<path d="M39.4 1083L45.6 1094.3H33.2Z" fill="none" stroke="#e8710a" stroke-width="1.1" stroke-linejoin="round"/>
<path d="M39.4 1087V1090.6" stroke="#e8710a" stroke-width="1.1"/><circle cx="39.4" cy="1092.4" r="0.6" fill="#e8710a"/>
<circle cx="39.4" cy="1114.2" r="5.6" fill="none" stroke="#4c8df6" stroke-width="1.1"/>
<path d="M39.4 1113V1117.5" stroke="#4c8df6" stroke-width="1.1"/><circle cx="39.4" cy="1111" r="0.6" fill="#4c8df6"/>
<rect x="36.699999999999996" y="1134.1999999999998" width="5.4" height="9.4" rx="2.7" fill="none" stroke="#474747" stroke-width="1"/>
<path d="M33.8 1138.6H36.699999999999996M42.1 1138.6H45.0M34.4 1133.6V1134.8Q34.4 1136.0 36.699999999999996 1136.1M44.4 1133.6V1134.8Q44.4 1136.0 42.1 1136.1M34.4 1143.6V1142.3999999999999Q34.4 1141.1999999999998 36.699999999999996 1141.1M44.4 1143.6V1142.3999999999999Q44.4 1141.1999999999998 42.1 1141.1M38.4 1132.6V1134.1999999999998M40.4 1132.6V1134.1999999999998" fill="none" stroke="#474747" stroke-width="1"/>
<path d="M365.60 467.70 L395.90 485.20 L389.60 489.60 L526.20 664.63 L524.80 665.77 L381.80 495.10 L376.30 500.90Z" fill="#f25050" stroke="#f25050" stroke-width="0.4" stroke-linejoin="round"/>
</svg>
</body></html>
